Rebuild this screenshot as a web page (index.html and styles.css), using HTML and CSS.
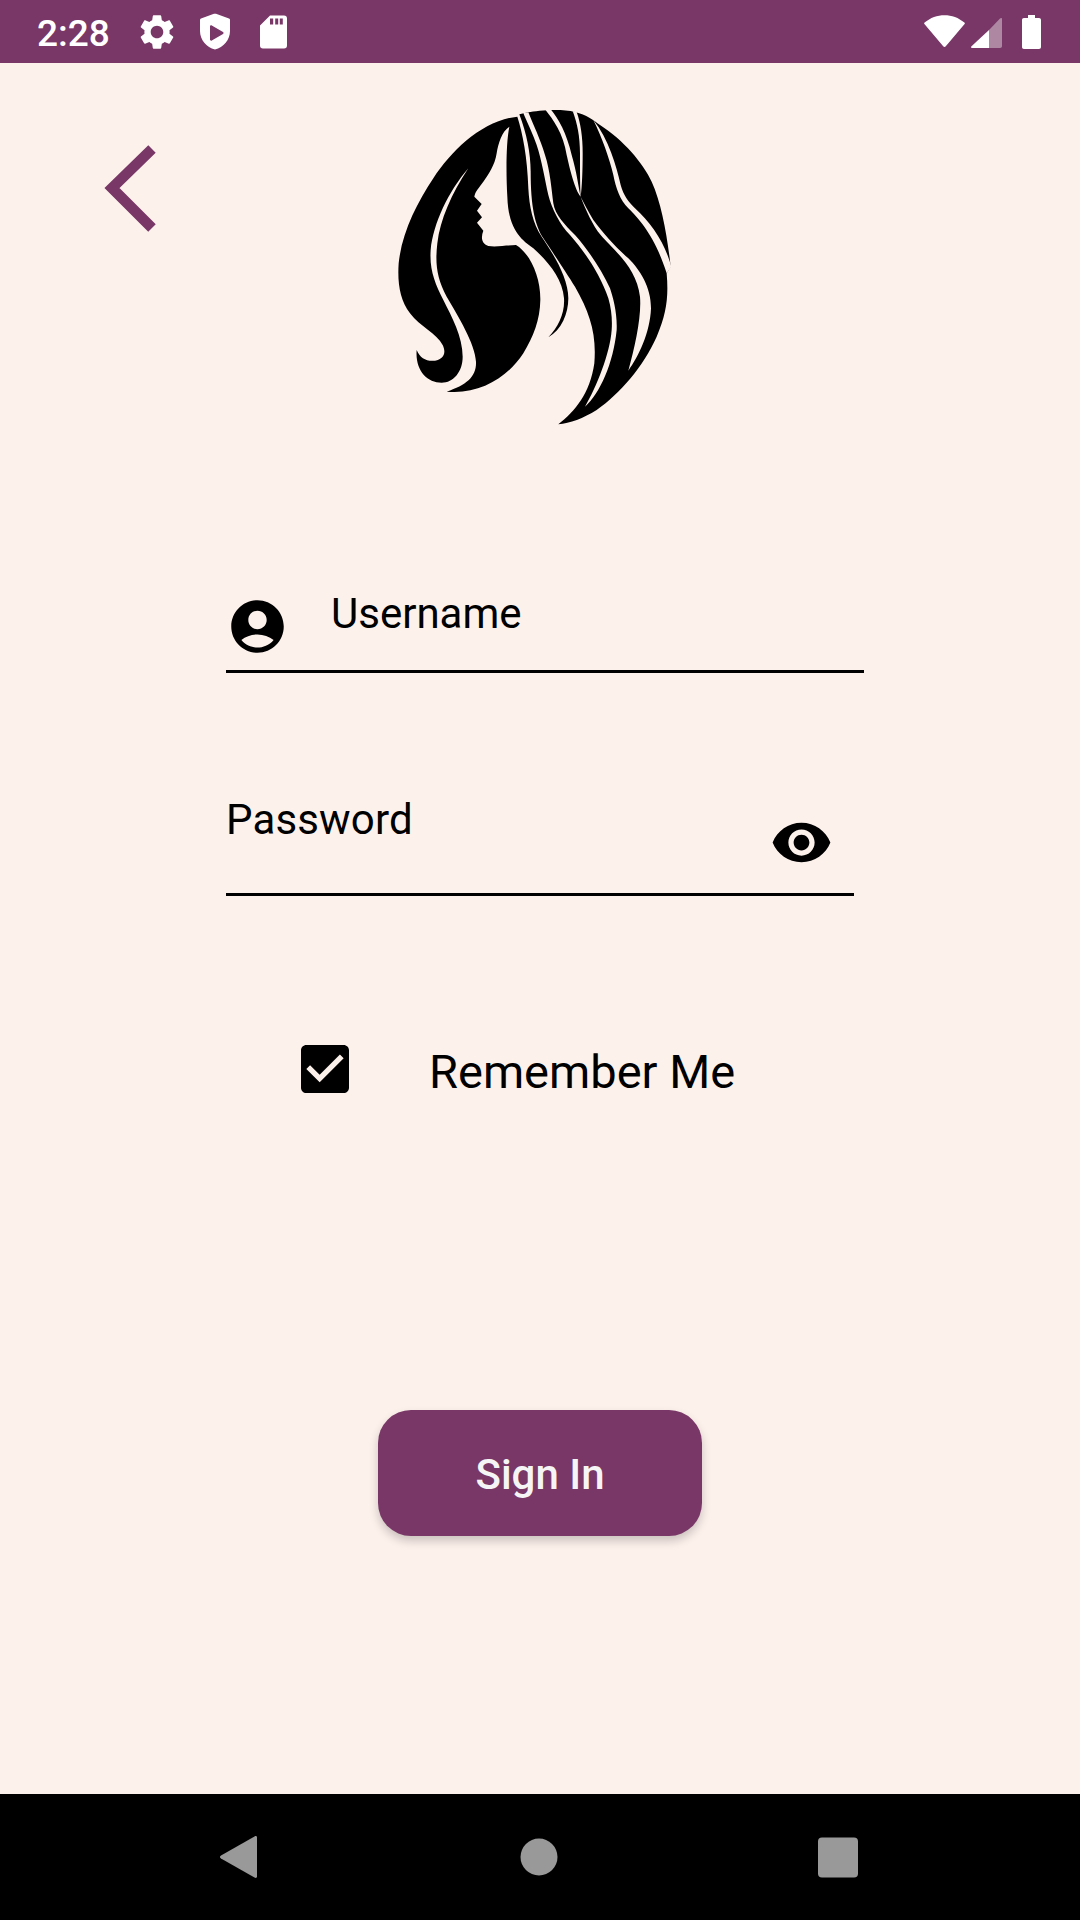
FILE: index.html
```html
<!DOCTYPE html>
<html lang="en">
<head>
<meta charset="utf-8">
<title>Sign In</title>
<link rel="stylesheet" href="styles.css">
</head>
<body>
<div class="screen">
  <header class="status-bar">
    <span class="time">2:28</span>
    <div class="status-left">
      <svg class="status-icon" viewBox="0 0 24 24"><path d="M19.14 12.94c.04-.3.06-.61.06-.94 0-.32-.02-.64-.07-.94l2.03-1.58c.18-.14.23-.41.12-.61l-1.92-3.32c-.12-.22-.37-.29-.59-.22l-2.39.96c-.5-.38-1.03-.7-1.62-.94l-.36-2.54c-.04-.24-.24-.41-.48-.41h-3.84c-.24 0-.43.17-.47.41l-.36 2.54c-.59.24-1.13.57-1.62.94l-2.39-.96c-.22-.08-.47 0-.59.22L2.74 8.87c-.12.21-.08.47.12.61l2.03 1.58c-.05.3-.09.63-.09.94s.02.64.07.94l-2.03 1.58c-.18.14-.23.41-.12.61l1.92 3.32c.12.22.37.29.59.22l2.39-.96c.5.38 1.03.7 1.62.94l.36 2.54c.05.24.24.41.48.41h3.84c.24 0 .44-.17.47-.41l.36-2.54c.59-.24 1.13-.56 1.62-.94l2.39.96c.22.08.47 0 .59-.22l1.92-3.32c.12-.22.07-.47-.12-.61l-2.01-1.58zM12 15.6c-1.98 0-3.6-1.62-3.6-3.6s1.62-3.6 3.6-3.6 3.6 1.62 3.6 3.6-1.62 3.6-3.6 3.6z"/></svg>
      <svg class="status-icon" viewBox="0 0 42 42"><path fill-rule="evenodd" d="M20 2.8 L7 7.6 C6.4 7.8 6 8.4 6 9 V20 C6 29 12.5 36.2 21 38.5 C29.5 36.2 36 29 36 20 V9 C36 8.4 35.6 7.8 35 7.6 L22 2.8 C21.4 2.6 20.6 2.6 20 2.8 Z M16 15.5 C16 14.6 17 14 17.8 14.5 L29 21 C29.8 21.5 29.8 22.5 29 23 L17.8 29.5 C17 30 16 29.4 16 28.5 Z"/></svg>
      <svg class="status-icon" viewBox="0 0 42 42"><path fill-rule="evenodd" d="M18 4.5 H32 A3 3 0 0 1 35 7.500 V34.500 A3 3 0 0 1 32 37.500 H11 A3 3 0 0 1 8 34.500 V14.500 Z M18 7.500 V13.500 H21.200 V7.500 Z M23.200 7.500 V13.500 H26.200 V7.500 Z M27.800 7.500 V13.500 H30.800 V7.500 Z"/></svg>
    </div>
    <div class="status-right">
      <svg class="wifi" viewBox="0 0 41 32"><path d="M0.600 7.500 C12 -2.300 29 -2.300 40.400 7.500 C41 8 41 8.600 40.600 9.100 L21.800 31.300 C21 32.200 20 32.200 19.200 31.300 L0.400 9.100 C0 8.600 0 8 0.600 7.500 Z"/></svg>
      <svg class="cell" viewBox="0 0 31 31"><path class="cell-dim" d="M18 13 L29 1.500 C30 0.500 31 1 31 2 V29 C31 30.300 30.300 31 29 31 H18 Z"/><path d="M18 13 V31 H1 C0 31 -0.300 30 0.500 29.200 Z"/></svg>
      <svg class="battery" viewBox="0 0 19 34"><path d="M6 0 H13 V3 H17 C18.200 3 19 3.800 19 5 V32 C19 33.200 18.200 34 17 34 H2 C0.800 34 0 33.200 0 32 V5 C0 3.800 0.800 3 2 3 H6 Z"/></svg>
    </div>
  </header>

  <main class="content">
    <div class="top-row">
      <svg class="back" viewBox="0 0 60 100"><polyline points="52,10 12,49 52,89"/></svg>
      <svg class="logo" viewBox="0 0 900 1020">
        <path d="M412 50 C428 100 442 170 445 265 C448 320 458 370 485 410 C515 455 565 530 565 595 C565 640 545 690 505 712 C535 680 555 640 552 595 C548 535 500 480 460 445 C425 420 385 390 382 290 C378 220 378 130 388 80 C365 95 355 130 350 160 C345 195 325 225 310 245 C298 262 285 275 283 290 L305 312 L291 332 L306 352 L291 368 L310 392 C303 410 303 430 325 438 C350 442 385 435 408 435 C450 460 482 530 481 600 C480 660 460 710 430 760 C385 830 300 885 200 875 C260 855 290 830 288 785 C285 730 235 650 200 590 C170 535 165 490 172 430 C180 360 215 280 265 205 C205 275 160 370 152 450 C148 510 165 550 190 600 C215 650 248 710 248 770 C248 815 220 848 185 848 C140 848 105 810 110 750 C120 775 140 785 165 782 C190 778 200 760 188 735 C170 700 120 680 90 640 C60 600 52 550 56 490 C65 400 110 310 160 235 C215 150 310 60 412 50 Z"/>
        <path d="M418 43 L445 37 C470 32 540 24 585 36 C620 45 640 60 660 75 C730 120 790 190 815 245 C845 310 862 410 872 500 L860 520 C866 590 860 640 830 710 C790 800 720 880 650 930 C610 955 570 970 535 973 C585 935 630 880 643 790 C650 700 630 640 585 560 C560 520 520 460 490 415 C465 375 452 320 452 215 C452 160 440 100 418 43 Z"/>
        <path class="logo-gap" d="M430 40 C445 75 460 105 470 135 C485 180 495 240 505 285 C515 325 540 375 570 405 C610 450 660 520 685 595 C695 630 697 660 695 690 C690 760 650 860 615 920 C660 880 700 790 710 690 C712 640 700 595 690 565 C665 510 625 450 585 405 C555 375 525 345 520 310 C515 270 510 210 495 165 C480 115 460 75 445 37 Z"/>
        <path class="logo-gap" d="M602 290 C615 325 640 380 662 405 C695 445 770 500 780 590 C785 650 765 740 745 812 C775 770 810 700 813 625 C813 560 780 510 745 475 C710 445 670 400 640 360 C625 335 612 310 602 290 Z"/>
        <path class="logo-gap" d="M495 28 C520 60 550 100 560 165 C570 210 585 270 602 290 C595 260 590 215 575 165 C560 100 535 55 512 28 Z"/>
        <path class="logo-gap" d="M578 33 C592 70 600 110 600 160 C600 210 600 260 602 290 C606 260 608 210 608 160 C608 110 602 70 590 36 Z"/>
        <path class="logo-gap" d="M640 60 C665 110 690 180 700 225 C708 265 720 300 745 325 C780 360 825 410 860 520 L874 500 C855 430 815 370 765 325 C745 305 730 285 722 255 C710 200 685 115 640 60 Z"/>
      </svg>
    </div>

    <div class="form">
      <div class="field field-user">
        <svg class="field-icon" viewBox="0 0 24 24"><path d="M12 2C6.480 2 2 6.480 2 12s4.480 10 10 10 10-4.480 10-10S17.520 2 12 2zm0 4c1.930 0 3.500 1.570 3.500 3.500S13.930 13 12 13s-3.500-1.570-3.500-3.500S10.070 6 12 6zm0 14c-2.030 0-4.430-.82-6.140-2.880C7.550 15.800 9.680 15 12 15s4.450.8 6.140 2.120C16.430 19.180 14.030 20 12 20z"/></svg>
        <span class="field-label">Username</span>
      </div>
      <div class="field field-pass">
        <span class="field-label field-label-pass">Password</span>
        <svg class="eye" viewBox="0 0 24 24"><path d="M12 4.500C7 4.500 2.730 7.610 1 12c1.730 4.390 6 7.500 11 7.500s9.270-3.110 11-7.500c-1.730-4.390-6-7.500-11-7.500zM12 17c-2.760 0-5-2.240-5-5s2.240-5 5-5 5 2.240 5 5-2.240 5-5 5zm0-8c-1.660 0-3 1.340-3 3s1.340 3 3 3 3-1.340 3-3-1.340-3-3-3z"/></svg>
      </div>
      <div class="remember">
        <svg class="check" viewBox="0 0 24 24"><path d="M19 3H5c-1.110 0-2 .9-2 2v14c0 1.100.89 2 2 2h14c1.110 0 2-.9 2-2V5c0-1.100-.89-2-2-2zm-9 14l-5-5 1.410-1.410L10 14.170l7.590-7.590L19 8l-9 9z"/></svg>
        <span class="remember-label">Remember Me</span>
      </div>
    </div>

    <button class="sign-in" type="button">Sign In</button>
  </main>

  <nav class="nav-bar">
    <svg class="nav-icon" viewBox="0 0 60 60"><path d="M11 28.500 L44.500 9.400 C46 8.600 47 9.300 47 10.500 V49.500 C47 50.700 46 51.400 44.500 50.600 L11 31.500 C9.600 30.700 9.600 29.300 11 28.500 Z"/></svg>
    <svg class="nav-icon" viewBox="0 0 60 60"><circle cx="29" cy="30" r="18.500"/></svg>
    <svg class="nav-icon" viewBox="0 0 60 60"><rect x="8" y="10.500" width="40" height="40" rx="4"/></svg>
  </nav>
</div>
</body>
</html>
```

FILE: styles.css
```css
* { box-sizing: border-box; }

html, body {
  margin: 0;
  padding: 0;
}

body {
  font-family: Roboto, "Liberation Sans", sans-serif;
  color: #000;
}

.screen {
  width: 1080px;
  height: 1920px;
  display: flex;
  flex-direction: column;
  background: #fdf1ec;
  overflow: hidden;
}

/* Status bar */
.status-bar {
  flex: 0 0 63px;
  display: flex;
  align-items: center;
  padding: 0 39px 0 37px;
  background: #783767;
  color: #fff;
}

.time {
  width: 72px;
  padding-top: 5px;
  font-size: 37px;
  font-weight: 500;
  line-height: 42px;
  white-space: nowrap;
}

.status-left {
  display: flex;
  gap: 16px;
  margin-left: 27px;
}

.status-icon {
  width: 42px;
  height: 42px;
  fill: #fff;
}

.status-right {
  display: flex;
  align-items: flex-start;
  margin-left: auto;
}

.wifi { width: 41px; height: 32px; fill: #fff; }
.cell { width: 31px; height: 31px; margin: 2px 0 0 6px; fill: #fff; }
.cell-dim { fill: rgba(255, 255, 255, 0.4); }
.battery { width: 19px; height: 34px; margin-left: 20px; fill: #fff; }

/* Body */
.content {
  flex: 1;
  display: flex;
  flex-direction: column;
}

.top-row {
  display: flex;
  align-items: flex-start;
  padding: 37px 0 0 100px;
}

.back {
  width: 60px;
  height: 100px;
  margin-top: 39px;
  fill: none;
  stroke: #783767;
  stroke-width: 10.6;
}

.logo {
  width: 300px;
  height: 340px;
  margin-left: 220px;
  fill: #000;
}

.logo-gap { fill: #fdf1ec; }

.form {
  display: flex;
  flex-direction: column;
  padding-left: 226px;
}

.field {
  display: flex;
  align-items: flex-start;
  border-bottom: 3px solid #000;
}

.field-label {
  font-size: 42px;
  line-height: 50px;
}

.field-label-pass {
  margin-top: -1px;
  letter-spacing: 0.15px;
}

.field-user {
  width: 638px;
  height: 84px;
  margin-top: 149px;
}

.field-icon {
  width: 63px;
  height: 63px;
  margin: 6px 42px 0 0;
  flex: none;
}

.field-pass {
  width: 628px;
  height: 100px;
  margin-top: 123px;
  justify-content: space-between;
  padding-right: 21px;
}

.eye {
  width: 63px;
  height: 63px;
  margin-top: 15px;
  flex: none;
}

.remember {
  display: flex;
  align-items: center;
  margin: 141px 0 0 67px;
}

.check {
  width: 64px;
  height: 64px;
  flex: none;
}

.remember-label {
  margin-left: 72px;
  padding-top: 5px;
  font-size: 47px;
  line-height: 54px;
}

.sign-in {
  align-self: center;
  width: 324px;
  height: 126px;
  margin-top: 309px;
  padding: 2px 0 0;
  border: none;
  border-radius: 33px;
  background: #783767;
  color: #f5f5f5;
  font-family: inherit;
  font-size: 42px;
  font-weight: 500;
  box-shadow: 0 5px 10px rgba(0, 0, 0, 0.2);
}

/* Navigation bar */
.nav-bar {
  flex: 0 0 126px;
  display: flex;
  align-items: center;
  justify-content: center;
  gap: 240px;
  background: #000;
}

.nav-icon {
  width: 60px;
  height: 60px;
  fill: #999;
}
```
